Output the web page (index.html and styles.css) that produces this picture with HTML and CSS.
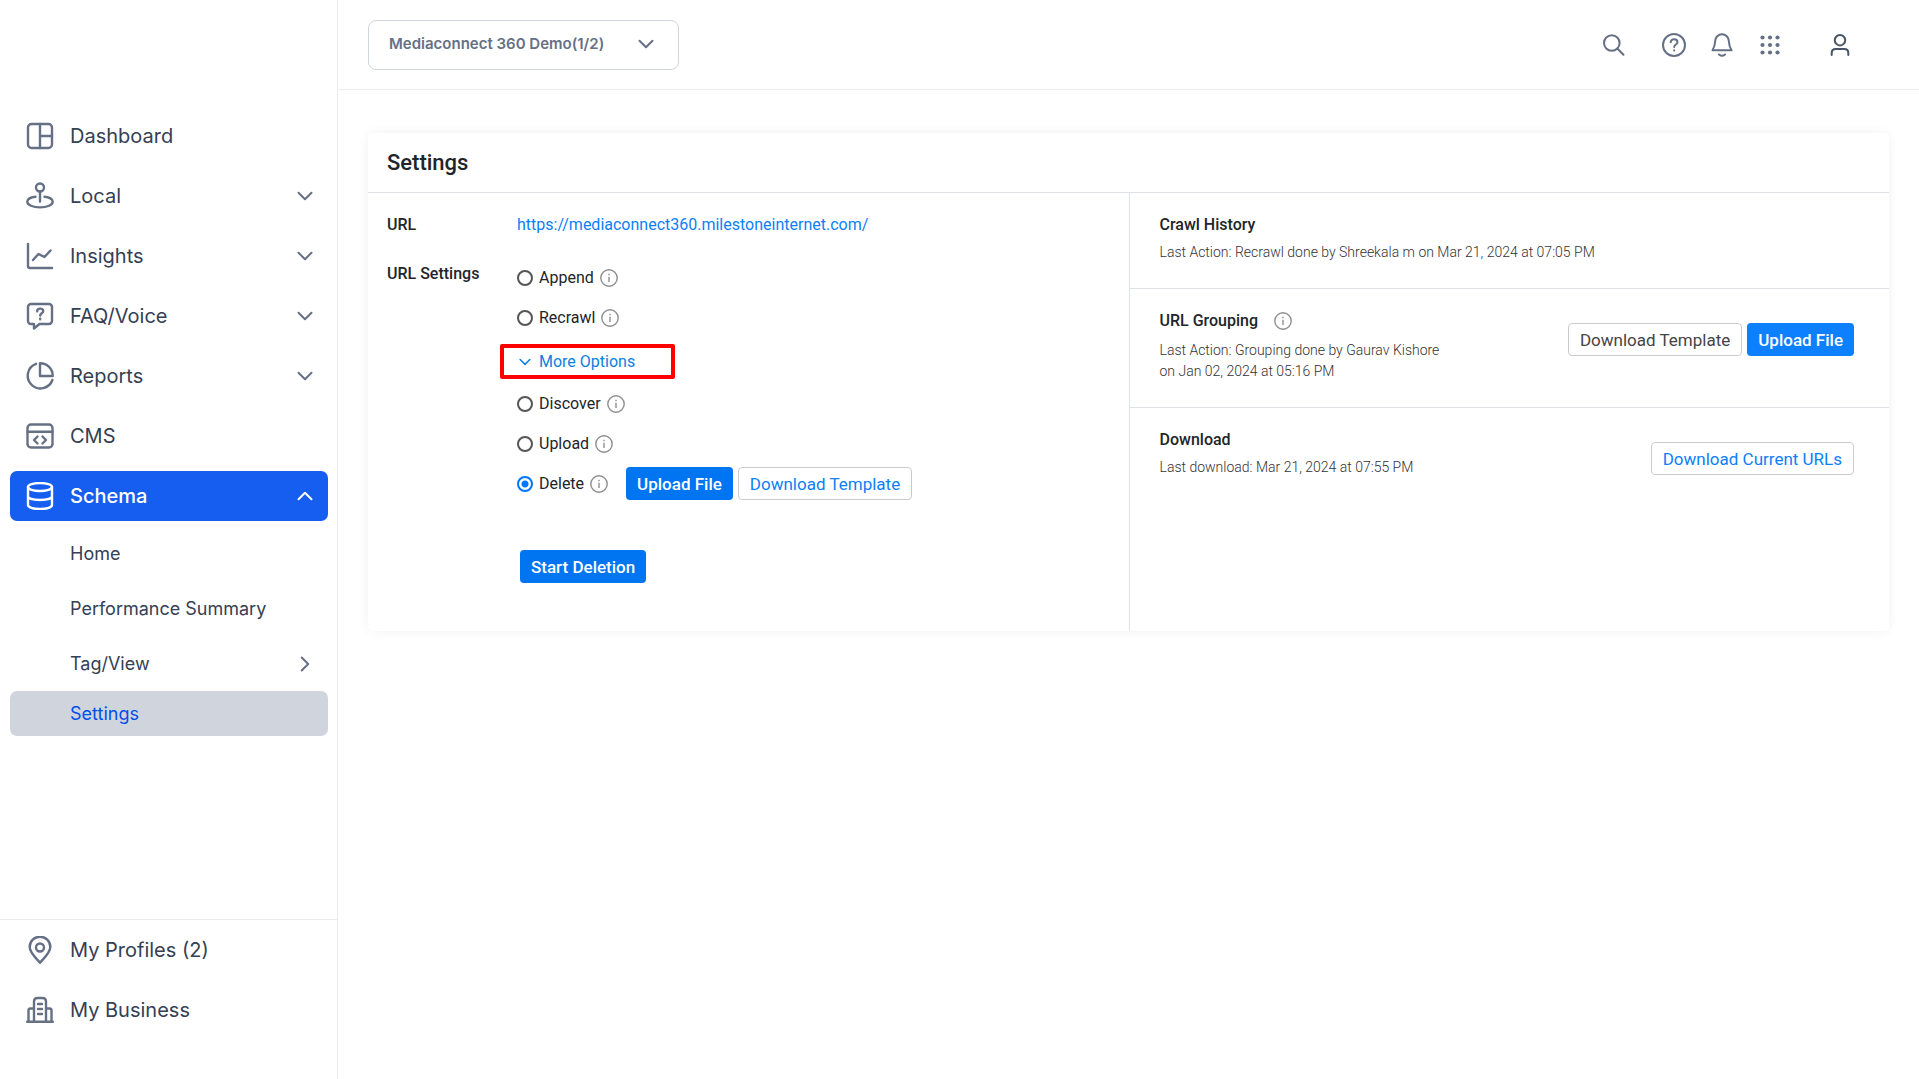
FILE: index.html
```html
<!DOCTYPE html>
<html lang="en">
<head>
<meta charset="utf-8">
<meta name="viewport" content="width=device-width, initial-scale=1">
<title>Settings</title>
<link rel="stylesheet" href="styles.css">
</head>
<body>
<svg class="sprite" aria-hidden="true">
  <symbol id="chevron" viewBox="0 0 16 16"><path d="M1.500 4.700l6.500 6.500 6.500-6.500"/></symbol>
  <symbol id="info" viewBox="0 0 18 18"><circle cx="9" cy="9" r="8.2"/><path d="M9 7.800v5.200M9 4.800v1.400"/></symbol>
</svg>
<div class="app">
  <aside class="sidebar">
    <nav class="nav" aria-label="Main">
      <a class="nav-item" href="#">
        <svg class="icon" viewBox="0 0 28 28"><rect x="2" y="2" width="24" height="24" rx="3.500"/><path d="M14 2v24M14 14h12"/></svg>
        <span class="nav-label">Dashboard</span>
      </a>
      <a class="nav-item" href="#">
        <svg class="icon" viewBox="0 0 28 28"><circle cx="14" cy="5.500" r="4"/><path d="M14 9.500v10M9.500 14.700C4.500 15.300 1.300 17 1.300 19.700c0 3.200 5.500 5.700 12.700 5.700s12.700-2.500 12.700-5.700c0-2.700-3.200-4.400-8.200-5"/></svg>
        <span class="nav-label">Local</span>
        <svg class="chevron" viewBox="0 0 16 16"><use href="#chevron"/></svg>
      </a>
      <a class="nav-item" href="#">
        <svg class="icon" viewBox="0 0 28 28"><path d="M2 2v22q0 2 2 2h22M7 18l5.500-6 6 3 6-6.500"/></svg>
        <span class="nav-label">Insights</span>
        <svg class="chevron" viewBox="0 0 16 16"><use href="#chevron"/></svg>
      </a>
      <a class="nav-item" href="#">
        <svg class="icon" viewBox="0 0 28 28"><path d="M5 2h18a3 3 0 0 1 3 3v14a3 3 0 0 1-3 3H13.500L8 26.500V22H5a3 3 0 0 1-3-3V5a3 3 0 0 1 3-3z"/><path d="M11.200 9.200c0-3.400 6-3.400 6 0 0 2-3 2.200-3 4.400M14.200 16.600v.6"/></svg>
        <span class="nav-label">FAQ/Voice</span>
        <svg class="chevron" viewBox="0 0 16 16"><use href="#chevron"/></svg>
      </a>
      <a class="nav-item" href="#">
        <svg class="icon" viewBox="0 0 28 28"><path d="M10 1.800A12.700 12.700 0 1 0 26.400 18"/><path d="M14 1.300a12.500 12.500 0 0 1 12.700 12.700H14z"/></svg>
        <span class="nav-label">Reports</span>
        <svg class="chevron" viewBox="0 0 16 16"><use href="#chevron"/></svg>
      </a>
      <a class="nav-item" href="#">
        <svg class="icon" viewBox="0 0 28 28"><rect x="1.500" y="2.500" width="25" height="23" rx="3.500"/><path d="M1.500 9.800h25M11.500 14.500L8 18l3.500 3.500M16.500 14.500L20 18l-3.500 3.500"/></svg>
        <span class="nav-label">CMS</span>
      </a>
      <a class="nav-item active" href="#" aria-expanded="true">
        <svg class="icon" viewBox="0 0 28 28"><ellipse cx="14" cy="5" rx="12" ry="4"/><path d="M2 5v18c0 2.200 5 4 12 4s12-1.800 12-4V5M2 14.300c0 2.200 5 3.700 12 3.700s12-1.500 12-3.700"/></svg>
        <span class="nav-label">Schema</span>
        <svg class="chevron up" viewBox="0 0 16 16"><use href="#chevron"/></svg>
      </a>
      <div class="subnav">
        <a class="sub-item" href="#">Home</a>
        <a class="sub-item" href="#">Performance Summary</a>
        <div class="sub-group">
          <a class="sub-item" href="#"><span class="nav-label">Tag/View</span><svg class="chevron right" viewBox="0 0 16 16"><use href="#chevron"/></svg></a>
          <a class="sub-item selected" href="#" aria-current="page">Settings</a>
        </div>
      </div>
    </nav>
    <nav class="nav-footer" aria-label="Account">
      <a class="nav-item" href="#">
        <svg class="icon" viewBox="0 0 28 28"><path d="M14 26.700C11 23 3.700 17 3.700 11a10.300 10.300 0 0 1 20.600 0c0 6-7.300 12-10.300 15.700z"/><circle cx="14" cy="11.500" r="4"/></svg>
        <span class="nav-label">My Profiles (2)</span>
      </a>
      <a class="nav-item" href="#">
        <svg class="icon" viewBox="0 0 28 28"><path d="M1.200 25.700h25.600M2.500 25.700V14.500q0-2 2-2H8M25.500 25.700V14.500q0-2-2-2H20M8 25.700V5.500q0-3.500 3.500-3.500h5Q20 2 20 5.500v20.200M12 8h4M12 13h4M12 18h4"/></svg>
        <span class="nav-label">My Business</span>
      </a>
    </nav>
  </aside>

  <div class="content">
    <header class="topbar">
      <button class="account" type="button">Mediaconnect 360 Demo(1/2)<svg class="chevron" viewBox="0 0 16 16"><use href="#chevron"/></svg></button>
      <div class="tools">
        <button class="tool search" type="button" aria-label="Search"><svg viewBox="0 0 24 24"><circle cx="9.800" cy="10" r="7.800"/><path d="M15.300 15.500l6.200 6.200"/></svg></button>
        <button class="tool" type="button" aria-label="Help"><svg viewBox="0 0 24 24"><circle cx="12" cy="12" r="11"/><path d="M8.700 9.300c0-4.200 6.800-4 6.800 0 0 2.200-3.300 2.300-3.300 4.600M12.200 17.200v.4"/></svg></button>
        <button class="tool" type="button" aria-label="Notifications"><svg viewBox="0 0 24 24"><path d="M2.500 17.300C4.500 14 5 12 5.200 8a6.800 6.800 0 0 1 13.600 0c.200 4 .700 6 2.700 9.300zM9 21.500q3 2.500 6 0"/></svg></button>
        <button class="tool" type="button" aria-label="Apps"><svg class="dots" viewBox="0 0 24 24"><circle cx="4.500" cy="4.500" r="2.100"/><circle cx="12" cy="4.500" r="2.100"/><circle cx="19.500" cy="4.500" r="2.100"/><circle cx="4.500" cy="12" r="2.100"/><circle cx="12" cy="12" r="2.100"/><circle cx="19.500" cy="12" r="2.100"/><circle cx="4.500" cy="19.500" r="2.100"/><circle cx="12" cy="19.500" r="2.100"/><circle cx="19.500" cy="19.500" r="2.100"/></svg></button>
        <button class="tool user" type="button" aria-label="Profile"><svg viewBox="0 0 24 24"><circle cx="12" cy="7.200" r="5.200"/><path d="M3.700 22v-2q0-4 4-4h8.600q4 0 4 4v2"/></svg></button>
      </div>
    </header>

    <main class="main">
      <section class="card">
        <h1 class="card-title">Settings</h1>
        <div class="columns">
          <div class="config">
            <h2 class="heading">URL</h2>
            <a class="site-link" href="#">https://mediaconnect360.milestoneinternet.com/</a>
            <h2 class="heading form-heading" id="url-settings">URL Settings</h2>
            <form class="options" aria-labelledby="url-settings">
              <div class="option"><input type="radio" name="action" id="append"><label for="append">Append</label><svg class="info" viewBox="0 0 18 18"><use href="#info"/></svg></div>
              <div class="option"><input type="radio" name="action" id="recrawl"><label for="recrawl">Recrawl</label><svg class="info" viewBox="0 0 18 18"><use href="#info"/></svg></div>
              <button class="more" type="button" aria-expanded="true"><svg class="chevron" viewBox="0 0 16 16"><use href="#chevron"/></svg>More Options</button>
              <div class="option"><input type="radio" name="action" id="discover"><label for="discover">Discover</label><svg class="info" viewBox="0 0 18 18"><use href="#info"/></svg></div>
              <div class="option"><input type="radio" name="action" id="upload"><label for="upload">Upload</label><svg class="info" viewBox="0 0 18 18"><use href="#info"/></svg></div>
              <div class="option"><input type="radio" name="action" id="delete" checked><label for="delete">Delete</label><svg class="info" viewBox="0 0 18 18"><use href="#info"/></svg>
                <div class="buttons"><button class="btn primary" type="button">Upload File</button><button class="btn outline blue" type="button">Download Template</button></div>
              </div>
              <button class="btn primary start" type="button">Start Deletion</button>
            </form>
          </div>
          <div class="activity">
            <section class="panel">
              <div>
                <h2 class="heading">Crawl History</h2>
                <p class="note">Last Action: Recrawl done by Shreekala m on Mar 21, 2024 at 07:05 PM</p>
              </div>
            </section>
            <section class="panel">
              <div>
                <h2 class="heading with-info">URL Grouping <svg class="info" viewBox="0 0 18 18"><use href="#info"/></svg></h2>
                <p class="note">Last Action: Grouping done by Gaurav Kishore<br>on Jan 02, 2024 at 05:16 PM</p>
              </div>
              <div class="buttons"><button class="btn outline" type="button">Download Template</button><button class="btn primary light" type="button">Upload File</button></div>
            </section>
            <section class="panel">
              <div>
                <h2 class="heading">Download</h2>
                <p class="note">Last download: Mar 21, 2024 at 07:55 PM</p>
              </div>
              <div class="buttons"><button class="btn outline blue" type="button">Download Current URLs</button></div>
            </section>
          </div>
        </div>
      </section>
    </main>
  </div>
</div>
</body>
</html>
```
FILE: styles.css
```css
* { box-sizing: border-box; }
body { margin: 0; background: #fff; color: #212529; font-family: Roboto, "Liberation Sans", sans-serif; font-size: 16px; line-height: 20px; }
a { text-decoration: none; color: inherit; }
h1, h2, p { margin: 0; }
button { font: inherit; color: inherit; background: none; border: 0; padding: 0; cursor: pointer; }
svg { flex: none; fill: none; stroke: currentColor; stroke-width: 2; stroke-linecap: round; stroke-linejoin: round; }
.sprite { position: absolute; width: 0; height: 0; }

.app { display: flex; min-height: 100vh; }

/* Sidebar */
.sidebar { flex: none; width: 338px; display: flex; flex-direction: column; justify-content: space-between; border-right: 1px solid #eaecf0; font-family: Inter, "Liberation Sans", sans-serif; color: #344054; }
.nav { display: flex; flex-direction: column; gap: 10px; padding: 111px 9px 0 10px; }
.nav-item { display: flex; align-items: center; gap: 16px; height: 50px; padding: 0 15px 0 16px; border-radius: 7px; font-size: 20px; }
.nav-label { flex: 1; }
.icon { width: 28px; height: 28px; color: #667085; stroke-width: 2.4; }
.chevron { width: 16px; height: 16px; color: #667085; stroke-width: 2; }
.up { transform: rotate(180deg); }
.right { transform: rotate(-90deg); }
.active { background: #155eef; color: #fff; font-weight: 500; }
.active svg { color: #fff; }
.subnav { display: flex; flex-direction: column; gap: 10px; }
.sub-group { display: flex; flex-direction: column; gap: 5px; }
.sub-item { display: flex; align-items: center; height: 45px; padding: 0 15px 0 60px; border-radius: 7px; font-size: 18px; }
.selected { background: #d0d5dd; color: #004eeb; }
.nav-footer { display: flex; flex-direction: column; gap: 10px; padding: 5px 9px 44px 10px; border-top: 1px solid #eaecf0; }

/* Top bar */
.content { flex: 1; min-width: 0; }
.topbar { display: flex; align-items: center; justify-content: space-between; height: 90px; padding: 0 67px 0 30px; border-bottom: 1px solid #eaecf0; font-family: Inter, "Liberation Sans", sans-serif; }
.account { display: flex; align-items: center; gap: 34px; height: 50px; padding: 0 24px 2px 20px; border: 1px solid #d0d5dd; border-radius: 8px; color: #667085; font-size: 15px; font-weight: 600; }
.tools { display: flex; align-items: center; gap: 24px; color: #667085; }
.tool { display: flex; }
.tool svg { width: 24px; height: 24px; }
.tool .dots { fill: currentColor; stroke: none; }
.search { margin-right: 12px; }
.user { margin-left: 22px; color: #475467; }

/* Settings card */
.main { padding: 43px 30px; }
.card { border-radius: 5px; box-shadow: 0 0 12px rgba(0, 0, 0, .06); }
.card-title { padding: 18px 19px 17px; border-bottom: 1px solid #dee2e6; font-size: 22px; font-weight: 500; line-height: 24px; }
.columns { display: grid; grid-template-columns: 1fr 1fr; min-height: 438px; }
.heading { font-size: 16px; font-weight: 500; }
.config { display: grid; grid-template-columns: 110px 1fr; align-content: start; gap: 26px 20px; padding: 22px 19px 48px; }
.form-heading { padding-top: 3px; }
.site-link { color: #0d80f8; }
.options { display: flex; flex-direction: column; align-items: flex-start; gap: 7px; }
.option { display: flex; align-items: center; height: 33px; gap: 6px; }
.option input { appearance: none; flex: none; width: 16px; height: 16px; margin: 0; border: 2px solid #555; border-radius: 50%; }
.option input:checked { border-color: #0075ff; background: radial-gradient(circle, #0075ff 3px, transparent 4px); }
.info { width: 18px; height: 18px; color: #8f8f8f; stroke-width: 1.4; stroke-linecap: butt; }
.more { position: relative; display: flex; align-items: center; gap: 8px; height: 35px; margin: 3px 0 1px; color: #0d7fe0; }
.more .chevron { width: 12px; height: 12px; margin-left: 2px; color: inherit; }
.more::after { content: ""; position: absolute; inset: 0 -40px 0 -17px; border: 4px solid #f00; border-radius: 2px; }
.buttons { display: flex; gap: 5px; }
.option .buttons { margin-left: 12px; }
.btn { height: 33px; padding: 0 11px; border: 1px solid transparent; border-radius: 4px; font-size: 17px; white-space: nowrap; }
.primary { padding: 0 10px; background: #0075f2; color: #fff; font-weight: 500; }
.light { background: #0d80ff; }
.outline { border-color: #ccc; color: #444; background: #fff; }
.blue { color: #0d80f8; }
.start { margin: 43px 0 0 3px; }

.activity { border-left: 1px solid #dee2e6; }
.panel { display: flex; align-items: flex-start; justify-content: space-between; padding: 22px 35px 25px 30px; }
.panel + .panel { border-top: 1px solid #dee2e6; }
.panel .buttons { padding-top: 12px; }
.with-info { display: flex; align-items: center; gap: 16px; padding-bottom: 2px; }
.note { margin-top: 7px; color: #333; font-size: 14px; font-weight: 300; line-height: 21px; }
```
